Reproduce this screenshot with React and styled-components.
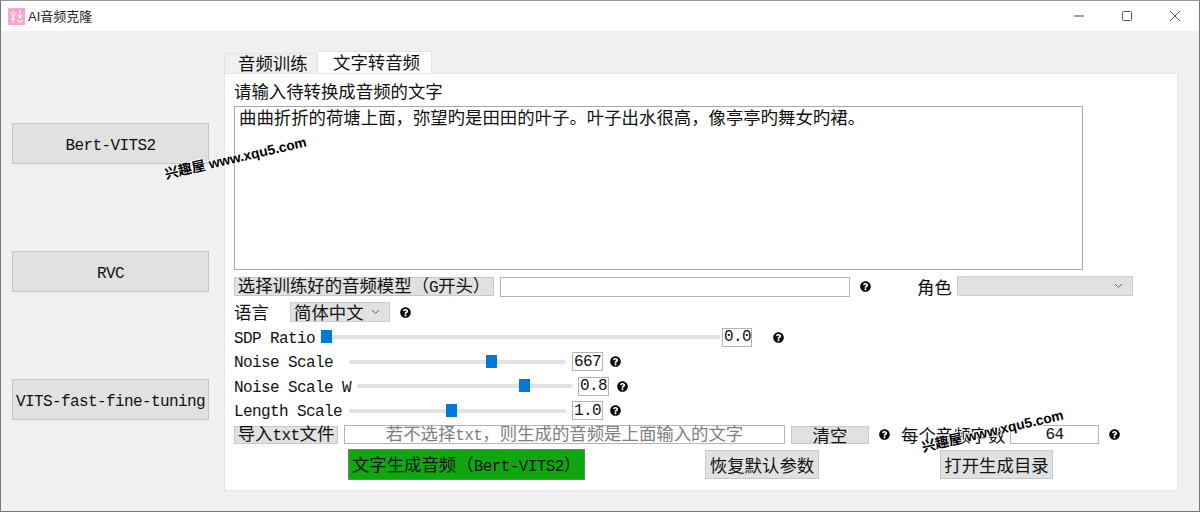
import React from 'react';
import styled, { createGlobalStyle } from 'styled-components';
import { FaQuestionCircle } from 'react-icons/fa';

const Global = createGlobalStyle`
  html, body { margin: 0; padding: 0; background: #fff; }
  body { font-family: "Noto Sans CJK SC", "Liberation Sans", sans-serif; font-size: 17.4px; color: #111; }
`;

const Win = styled.div`
  position: relative;
  width: 1200px;
  height: 512px;
  box-sizing: border-box;
  border: 1px solid #777;
  border-top-color: #999;
  display: flex;
  flex-direction: column;
  background: #f0f0f0;
  overflow: hidden;
`;
const TitleBar = styled.div`
  height: 30px;
  flex: none;
  background: #fff;
  display: flex;
  align-items: center;
  padding-left: 7px;
  gap: 3px;
  font-size: 13px;
  color: #222;
`;
const TitleText = styled.span`
  flex: 1;
  line-height: 14px;
  & b { font: 400 13px "Liberation Sans", sans-serif; }
`;
const WinControls = styled.div`
  display: flex;
  align-items: center;
  gap: 38px;
  padding-right: 19px;
  color: #555;
`;
const Body = styled.div`
  flex: 1;
  display: flex;
`;
const Sidebar = styled.div`
  width: 223px;
  flex: none;
  box-sizing: border-box;
  padding: 92px 15px 0 11px;
  display: flex;
  flex-direction: column;
  gap: 87px;
`;
const SideButton = styled.div`
  height: 41px;
  box-sizing: border-box;
  border: 1px solid #c4c4c4;
  background: #e1e1e1;
  padding-bottom: 2px;
  display: flex;
  align-items: center;
  justify-content: center;
  white-space: nowrap;
`;
const Main = styled.div`
  flex: 1;
  padding: 20px 21px 20px 0;
  display: flex;
  flex-direction: column;
`;
const Tabs = styled.div`
  display: flex;
  align-items: flex-end;
  height: 22px;
  flex: none;
`;
const Tab = styled.div`
  box-sizing: border-box;
  height: ${p => (p.$active ? 22 : 20)}px;
  width: ${p => (p.$active ? 114 : 94)}px;
  padding-left: ${p => (p.$active ? 15 : 13)}px;
  padding-bottom: ${p => (p.$active ? 2 : 1)}px;
  background: ${p => (p.$active ? '#fff' : '#f0f0f0')};
  border: 1px solid #e3e3e3;
  border-bottom: 0;
  border-left-width: ${p => (p.$active ? 0 : 1)}px;
  display: flex;
  align-items: center;
  line-height: 18px;
  white-space: nowrap;
`;
const Panel = styled.div`
  flex: 1;
  background: #fff;
  border: 1px solid #e6e6e6;
  box-sizing: border-box;
  padding: 8px 0 0 9px;
  display: flex;
  flex-direction: column;
`;
const Heading = styled.div`
  height: 18px;
  line-height: 18px;
  white-space: nowrap;
`;
const TextBox = styled.div`
  width: 849px;
  height: 164px;
  box-sizing: border-box;
  margin-top: 6px;
  border: 1px solid #a8a8a8;
  padding: 1px 0 0 4px;
  line-height: 18px;
  white-space: nowrap;
`;
const Row = styled.div`
  display: flex;
  align-items: center;
  height: ${p => p.$h || 24.5}px;
  margin-top: ${p => p.$mt || 0}px;
  flex: none;
  white-space: nowrap;
`;
const FlatButton = styled.div`
  width: ${p => p.$w}px;
  height: ${p => p.$h || 19}px;
  margin-left: ${p => p.$ml || 0}px;
  padding-top: ${p => (p.$h >= 29 ? 1 : 0)}px;
  box-sizing: border-box;
  flex: none;
  border: 1px solid #c8c8c8;
  background: ${p => (p.$green ? '#0ea80e' : '#e1e1e1')};
  border-color: ${p => (p.$green ? '#5d8f5d' : '#c8c8c8')};
  color: #111;
  display: flex;
  align-items: center;
  justify-content: center;
  line-height: 16px;
`;
const Field = styled.div`
  width: ${p => p.$w}px;
  height: ${p => p.$h || 20}px;
  margin-left: ${p => p.$ml || 0}px;
  box-sizing: border-box;
  flex: none;
  border: 1px solid #b4b4b4;
  background: #fff;
  color: ${p => (p.$muted ? '#808080' : '#111')};
  display: flex;
  align-items: center;
  justify-content: center;
  line-height: 16px;
`;
const Select = styled.div`
  width: ${p => p.$w}px;
  height: ${p => p.$h}px;
  margin-left: ${p => p.$ml || 0}px;
  margin-bottom: ${p => p.$mb || 0}px;
  box-sizing: border-box;
  flex: none;
  border: 1px solid #cdcdcd;
  background: #e1e1e1;
  display: flex;
  align-items: center;
  justify-content: space-between;
  padding: 0 9px 0 3px;
  line-height: 16px;
  color: #111;
`;
const Label = styled.span`
  width: ${p => (p.$w ? `${p.$w}px` : 'auto')};
  margin-left: ${p => p.$ml || 0}px;
  flex: none;
  line-height: 18px;
`;
const Help = styled(FaQuestionCircle)`
  width: 11px;
  height: 11px;
  flex: none;
  margin-left: ${p => p.$ml || 0}px;
  color: #0a0a0a;
`;
const Track = styled.div`
  position: relative;
  height: 4px;
  width: ${p => p.$w}px;
  flex: none;
  background: #e2e2e2;
  border-radius: 2px;
`;
const Handle = styled.div`
  position: absolute;
  top: -5px;
  width: 11px;
  height: 13px;
  background: #0078d7;
`;
const Value = styled(Field)`
  height: 19px;
  justify-content: flex-start;
  padding-left: 1px;
`;
const ActionRow = styled.div`
  display: flex;
  align-items: center;
  height: 31px;
  margin-top: 5px;
  flex: none;
  padding-left: 114px;
`;
const Latin = styled.span`
  font-family: "Liberation Mono", monospace;
  font-size: 16px;
  letter-spacing: -0.6px;
`;
const Watermark = styled.div`
  position: absolute;
  left: ${p => p.$x}px;
  top: ${p => p.$y}px;
  transform: rotate(-13deg);
  transform-origin: left center;
  font: 700 13.8px "Liberation Sans", "Noto Sans CJK SC", sans-serif;
  color: #000;
  white-space: nowrap;
  text-shadow: 0 0 1px #fff, 1px 1px 0 #fff, -1px -1px 0 #fff;
  line-height: 18px;
`;

const Mixed = ({ children }) => (
  <span>
    {String(children)
      .split(/([\x00-\x7f]+)/)
      .filter(Boolean)
      .map((part, i) =>
        /^[\x00-\x7f]+$/.test(part) ? <Latin key={i}>{part}</Latin> : <React.Fragment key={i}>{part}</React.Fragment>
      )}
  </span>
);

const Chevron = () => (
  <svg width="9" height="6" viewBox="0 0 9 6" fill="none" stroke="#666" strokeWidth="1">
    <path d="M1 1l3.5 3.5L8 1" />
  </svg>
);

const Logo = () => (
  <svg width="17" height="17" viewBox="0 0 17 17">
    <rect width="17" height="17" fill="#f9a3cf" />
    <g fill="none" stroke="#fff" strokeWidth="1.1">
      <path d="M2 5h2M6 5h2M5 3v2M5 7v8M3 7l4 0M3 11h4" />
      <path d="M12 2v8M10 7l2 3 2-3M9.500 12c1 2.500 4 2.500 5 0" />
    </g>
  </svg>
);

const sliders = [
  { name: 'SDP Ratio', labelW: 86, track: 400, pos: 0.0025, val: '0.0', valW: 30, valMl: 2, helpMl: 21 },
  { name: 'Noise Scale', labelW: 115, track: 217, pos: 0.667, val: '667', valW: 31, valMl: 6, helpMl: 7 },
  { name: 'Noise Scale W', labelW: 123, track: 216, pos: 0.79, val: '0.8', valW: 31, valMl: 5, helpMl: 8 },
  { name: 'Length Scale', labelW: 115, track: 217, pos: 0.47, val: '1.0', valW: 31, valMl: 6, helpMl: 7 },
];

export default function App() {
  return (
    <>
      <Global />
      <Win>
        <TitleBar>
          <Logo />
          <TitleText><b>AI</b>音频克隆</TitleText>
          <WinControls>
            <svg width="10" height="10" viewBox="0 0 10 10" stroke="#666" strokeWidth="1.2"><path d="M0 5h10" /></svg>
            <svg width="10" height="10" viewBox="0 0 10 10" fill="none" stroke="#555" strokeWidth="1"><rect x=".5" y=".5" width="9" height="9" rx="1" /></svg>
            <svg width="10" height="10" viewBox="0 0 10 10" stroke="#555" strokeWidth="1"><path d="M0 0l10 10M10 0L0 10" /></svg>
          </WinControls>
        </TitleBar>
        <Body>
          <Sidebar>
            <SideButton><Mixed>Bert-VITS2</Mixed></SideButton>
            <SideButton><Mixed>RVC</Mixed></SideButton>
            <SideButton><Mixed>VITS-fast-fine-tuning</Mixed></SideButton>
          </Sidebar>
          <Main>
            <Tabs>
              <Tab>音频训练</Tab>
              <Tab $active>文字转音频</Tab>
            </Tabs>
            <Panel>
              <Heading>请输入待转换成音频的文字</Heading>
              <TextBox>曲曲折折的荷塘上面，弥望旳是田田的叶子。叶子出水很高，像亭亭旳舞女旳裙。</TextBox>
              <Row $h={21} $mt={6}>
                <FlatButton $w={260}><Mixed>选择训练好的音频模型（G开头）</Mixed></FlatButton>
                <Field $w={350} $ml={6} />
                <Help $ml={10} />
                <Label $ml={46} $w={34}>角色</Label>
                <Select $w={176} $h={20} $ml={6} $mb={1}><span /><Chevron /></Select>
              </Row>
              <Row $h={20} $mt={5}>
                <Label $w={56}>语言</Label>
                <Select $w={100} $h={20}>简体中文<Chevron /></Select>
                <Help $ml={10} />
              </Row>
              {sliders.map(s => (
                <Row key={s.name} $mt={s.name === 'SDP Ratio' ? 3 : 0}>
                  <Label $w={s.labelW}><Latin>{s.name}</Latin></Label>
                  <Track $w={s.track}>
                    <Handle style={{ left: `${s.pos * (s.track - 11)}px` }} />
                  </Track>
                  <Value $w={s.valW} $ml={s.valMl}><Latin>{s.val}</Latin></Value>
                  <Help $ml={s.helpMl} />
                </Row>
              ))}
              <Row $h={19} $mt={2}>
                <FlatButton $w={104} $h={18}><Mixed>导入txt文件</Mixed></FlatButton>
                <Field $w={441} $h={19} $ml={6} $muted><Mixed>若不选择txt，则生成的音频是上面输入的文字</Mixed></Field>
                <FlatButton $w={78} $h={18} $ml={6}>清空</FlatButton>
                <Help $ml={10} />
                <Label $ml={11} $w={103}>每个音频字数</Label>
                <Field $w={89} $h={19} $ml={6}><Latin>64</Latin></Field>
                <Help $ml={10} />
              </Row>
              <ActionRow>
                <FlatButton $green $w={237} $h={31}><Mixed>文字生成音频（Bert-VITS2）</Mixed></FlatButton>
                <FlatButton $w={114} $h={29} $ml={120}>恢复默认参数</FlatButton>
                <FlatButton $w={113} $h={29} $ml={121}>打开生成目录</FlatButton>
              </ActionRow>
            </Panel>
          </Main>
        </Body>
        <Watermark $x={164} $y={165}>兴趣屋 www.xqu5.com</Watermark>
        <Watermark $x={921} $y={438}>兴趣屋 www.xqu5.com</Watermark>
      </Win>
    </>
  );
}
